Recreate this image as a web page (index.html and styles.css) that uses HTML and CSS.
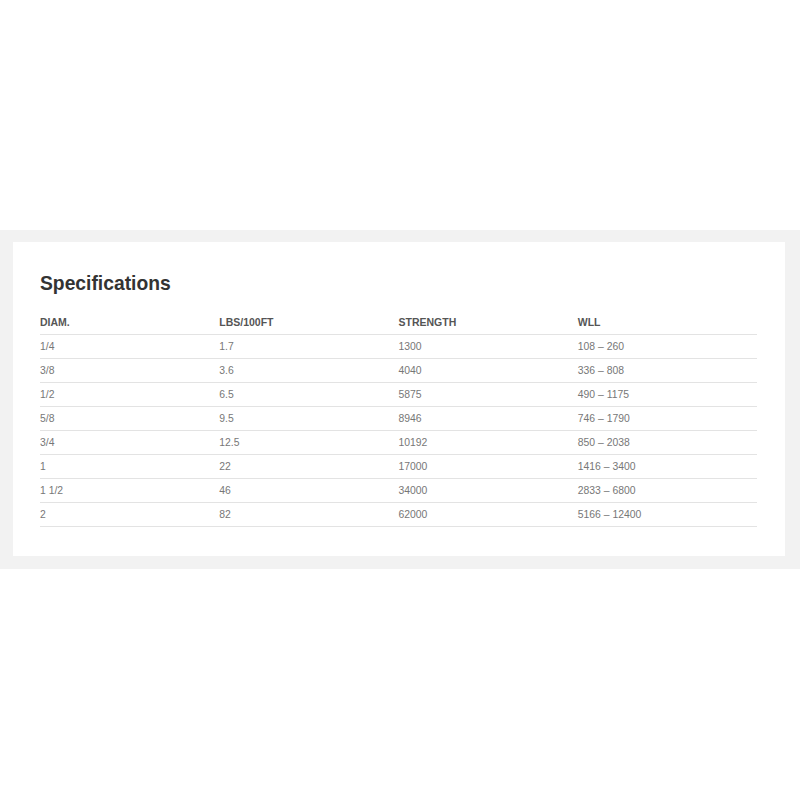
FILE: index.html
```html
<!DOCTYPE html>
<html>
<head>
<meta charset="utf-8">
<link rel="stylesheet" href="styles.css">
</head>
<body>
<div class="band">
  <div class="card">
    <h2 class="title">Specifications</h2>
    <table class="specs">
      <thead>
        <tr><th>DIAM.</th><th>LBS/100FT</th><th>STRENGTH</th><th>WLL</th></tr>
      </thead>
      <tbody>
        <tr><td>1/4</td><td>1.7</td><td>1300</td><td>108 – 260</td></tr>
        <tr><td>3/8</td><td>3.6</td><td>4040</td><td>336 – 808</td></tr>
        <tr><td>1/2</td><td>6.5</td><td>5875</td><td>490 – 1175</td></tr>
        <tr><td>5/8</td><td>9.5</td><td>8946</td><td>746 – 1790</td></tr>
        <tr><td>3/4</td><td>12.5</td><td>10192</td><td>850 – 2038</td></tr>
        <tr><td>1</td><td>22</td><td>17000</td><td>1416 – 3400</td></tr>
        <tr><td>1 1/2</td><td>46</td><td>34000</td><td>2833 – 6800</td></tr>
        <tr><td>2</td><td>82</td><td>62000</td><td>5166 – 12400</td></tr>
      </tbody>
    </table>
  </div>
</div>
</body>
</html>
```
FILE: styles.css
```css
html, body {
  margin: 0;
  padding: 0;
  background: #ffffff;
  font-family: "Liberation Sans", Arial, sans-serif;
}
body {
  padding-top: 230px;
}
.band {
  background: #f2f2f2;
  padding: 12px 15px 13px 13px;
}
.card {
  background: #ffffff;
  padding: 30px 28px 29px 27px;
}
.title {
  margin: 0 0 15px 0;
  font-size: 19.3px;
  line-height: 24px;
  font-weight: bold;
  color: #333333;
}
.specs {
  width: 100%;
  border-collapse: collapse;
  table-layout: fixed;
  font-size: 10.4px;
}
.specs th, .specs td {
  text-align: left;
  padding: 0;
  height: 23px;
  line-height: 23px;
  border-bottom: 1px solid #e3e3e3;
  vertical-align: middle;
}
.specs th {
  font-size: 10.5px;
  font-weight: bold;
  color: #555555;
}
.specs td {
  color: #777777;
}
```
